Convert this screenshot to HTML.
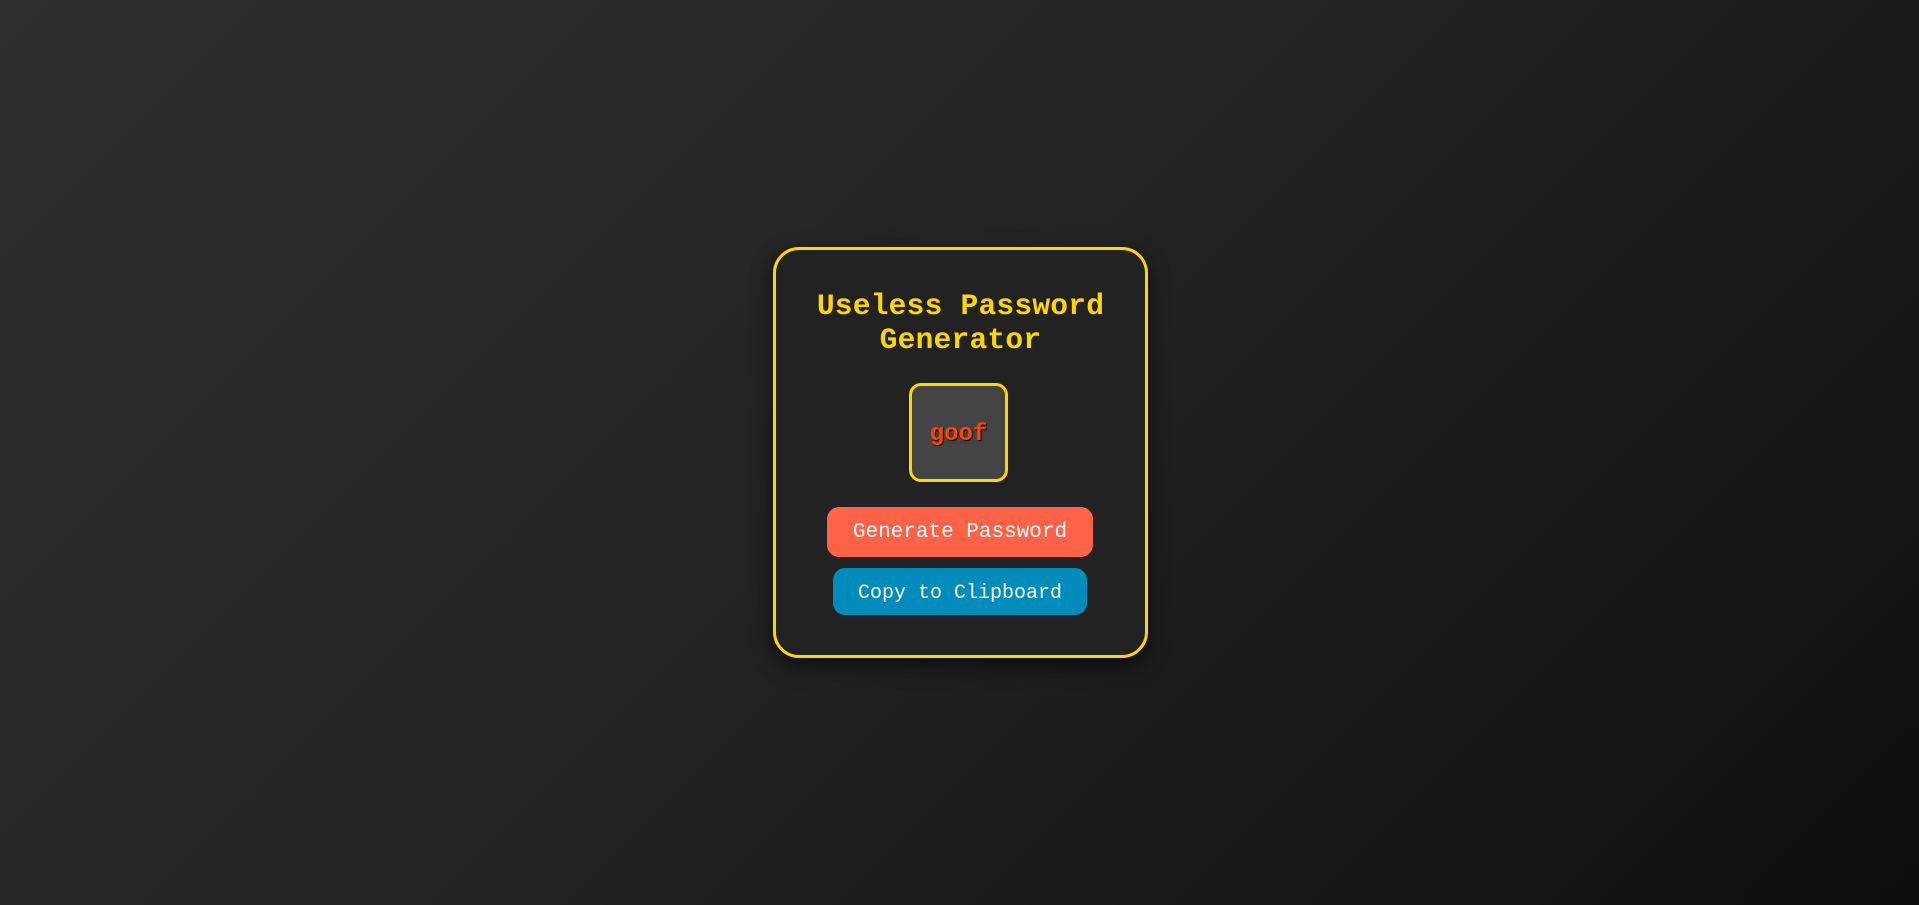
<!DOCTYPE html>
<html><head><style>
html,body{margin:0;width:1919px;height:905px;overflow:hidden}
body{background:linear-gradient(135deg,#2f2f2f 0%,#222 50%,#0e0e0e 100%);font-family:"Courier New","Liberation Mono",monospace;position:relative}
.card{position:absolute;left:773px;top:247px;width:369px;height:405px;border:3px solid #ffd700;border-radius:26px;background:#222;box-shadow:0 8px 20px rgba(0,0,0,.6)}
h1{position:absolute;left:0;right:0;top:39px;margin:0;text-align:center;color:#ffd700;font-size:29.6px;letter-spacing:0.2px;line-height:34px;font-weight:bold}
.pw{position:absolute;left:133px;top:133px;width:93px;height:93px;border:3px solid #ffd700;border-radius:12px;background:#444;display:flex;align-items:center;justify-content:center;color:#ff4500;font-weight:bold;font-size:24px;letter-spacing:0;text-shadow:1px 1px 1px #000;padding-top:3px;box-sizing:content-box}
.pw{height:90px}
.b{position:absolute;color:#fff;display:flex;align-items:center;justify-content:center;border-radius:12px;font-size:21px}
.g{left:51px;top:257px;width:266px;height:50px;background:#ff6347}
.c{left:57px;top:318px;width:254px;height:47px;background:#008cba;font-size:20px;padding-top:3px;box-sizing:border-box}
</style></head><body>
<div class="card">
<h1>Useless Password<br>Generator</h1>
<div class="pw">goof</div>
<div class="b g">Generate Password</div>
<div class="b c">Copy to Clipboard</div>
</div>
</body></html>
